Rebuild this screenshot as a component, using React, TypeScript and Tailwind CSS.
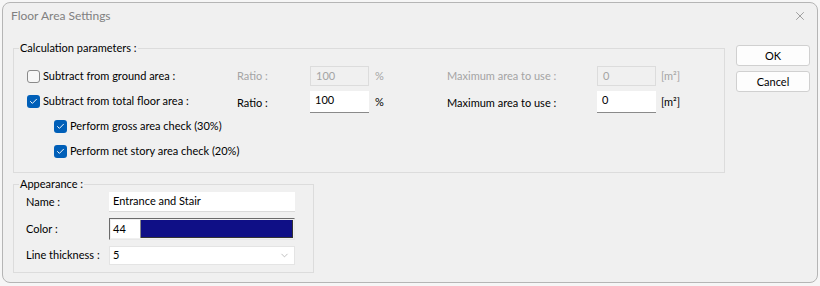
import { X, ChevronDown, Check } from 'lucide-react';

function Box({ checked }: { checked?: boolean }) {
    return checked ? (
        <span className="flex items-center justify-center w-[13px] h-[13px] rounded-[3px] bg-[#005fb8] text-white shrink-0">
            <Check size={9} strokeWidth={2.5} />
        </span>
    ) : (
        <span className="w-[13px] h-[13px] rounded-[3px] border border-[#8a8a8a] bg-[#f7f7f7] shrink-0" />
    );
}

function Field({ value, disabled, className = '' }: { value: string; disabled?: boolean; className?: string }) {
    return (
        <div
            className={
                disabled
                    ? `h-[20px] w-[59px] border border-[#dcdcdc] bg-[#f0f0f0] text-[#a4a4a4] pl-[5px] leading-[17px] ${className}`
                    : `h-[22px] w-[59px] bg-white border-b border-[#8a8a8a] text-black pl-[5px] leading-[18px] ${className}`
            }
        >
            {value}
        </div>
    );
}

export default function App() {
    return (
        <div className="w-[820px] h-[286px] bg-[#f6f6f6] p-[2px] font-['Lato',sans-serif] text-[11px] text-black">
            <div className="w-[816px] h-[281px] bg-[#f0f0f0] border border-[#b5b5b5] rounded-[8px] flex flex-col">
                {/* title bar */}
                <div className="h-[26px] flex items-center justify-between pl-[8px] pr-[10px]">
                    <span className="text-[#808080] text-[12px]">Floor Area Settings</span>
                    <X size={14} strokeWidth={1} className="text-[#666]" />
                </div>

                <div className="flex pl-[10px] pr-[8px] pt-[12px] gap-[11px]">
                    <div className="flex flex-col">
                        <fieldset className="w-[712px] h-[132px] border border-[#dcdcdc] pl-[13px] pr-0">
                            <legend className="ml-[-8px] px-[1px] leading-[14px]">Calculation parameters :</legend>

                            <div className="flex items-center h-[20px] mt-[11px]">
                                <div className="w-[210px] flex items-center gap-[3px]">
                                    <Box />
                                    <span>Subtract from ground area :</span>
                                </div>
                                <span className="w-[73px] text-[#a4a4a4]">Ratio :</span>
                                <Field value="100" disabled />
                                <span className="w-[78px] pl-[6px] text-[#a4a4a4]">%</span>
                                <span className="w-[150px] text-[#a4a4a4]">Maximum area to use :</span>
                                <Field value="0" disabled />
                                <span className="pl-[5px] text-[#a4a4a4]">[m²]</span>
                            </div>

                            <div className="flex items-center h-[22px] mt-[5px]">
                                <div className="w-[210px] flex items-center gap-[3px] self-start pt-[2px]">
                                    <Box checked />
                                    <span>Subtract from total floor area :</span>
                                </div>
                                <span className="w-[73px] pt-[3px]">Ratio :</span>
                                <Field value="100" />
                                <span className="w-[78px] pl-[6px]">%</span>
                                <span className="w-[150px] pt-[3px]">Maximum area to use :</span>
                                <Field value="0" />
                                <span className="pl-[5px]">[m²]</span>
                            </div>

                            <div className="flex flex-col gap-[8px] pl-[27px] mt-[5px]">
                                <div className="flex items-center gap-[3px] h-[17px]">
                                    <Box checked />
                                    <span>Perform gross area check (30%)</span>
                                </div>
                                <div className="flex items-center gap-[3px] h-[17px]">
                                    <Box checked />
                                    <span>Perform net story area check (20%)</span>
                                </div>
                            </div>
                        </fieldset>

                        <fieldset className="w-[301px] h-[96px] border border-[#dcdcdc] pl-[12px] mt-[4px]">
                            <legend className="ml-[-7px] px-[1px] leading-[14px]">Appearance :</legend>
                            <div className="grid grid-cols-[83px_186px] items-center gap-y-[6px] mt-[1px]">
                                <span>Name :</span>
                                <div className="h-[20px] bg-white border-b border-[#dadada] pl-[4px] leading-[18px]">Entrance and Stair</div>

                                <span>Color :</span>
                                <div className="h-[22px] border border-[#6a6a6a] border-r-[#e8e8e8] border-b-[#e8e8e8] flex p-px">
                                    <div className="w-[30px] bg-white pl-[2px] leading-[18px] border-r border-[#888]">44</div>
                                    <div className="flex-1 bg-[#0f0f86] border-r border-b border-[#333]" />
                                </div>

                                <span className="whitespace-nowrap">Line thickness :</span>
                                <div className="h-[19px] bg-white border border-[#e4e4e4] pl-[3px] flex items-center justify-between pr-[4px]">
                                    <span>5</span>
                                    <ChevronDown size={11} strokeWidth={1} className="text-[#777]" />
                                </div>
                            </div>
                        </fieldset>
                    </div>

                    <div className="flex flex-col gap-[5px] pt-[4px]">
                        <button className="w-[74px] h-[21px] bg-[#fdfdfd] border border-[#d0d0d0] rounded-[3px] leading-[18px]">OK</button>
                        <button className="w-[74px] h-[21px] bg-[#fdfdfd] border border-[#d0d0d0] rounded-[3px] leading-[18px]">Cancel</button>
                    </div>
                </div>
            </div>
        </div>
    );
}
